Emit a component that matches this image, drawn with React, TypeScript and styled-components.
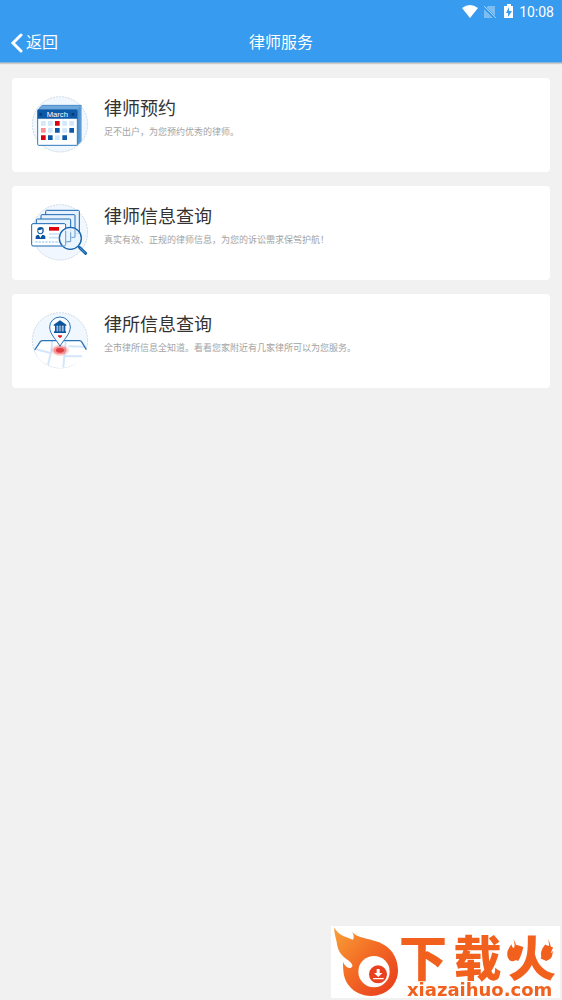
import React from "react";
import styled, { createGlobalStyle } from "styled-components";

const GlobalStyle = createGlobalStyle`
  * { box-sizing: border-box; }
  body {
    margin: 0;
    background: #f1f1f1;
    font-family: Roboto, "Noto Sans CJK SC", sans-serif;
  }
`;

const Header = styled.header`
  background: #379bef;
  border-bottom: 1px solid #8fb4d6;
  box-shadow: 0 1px 1px rgba(0, 0, 0, 0.16);
  color: #fff;
`;

const StatusBar = styled.div`
  display: flex;
  align-items: center;
  justify-content: flex-end;
  height: 24px;
  padding-right: 8px;
  font-size: 14px;
  line-height: 24px;
`;

const StatusIcons = styled.svg`
  width: 56px;
  height: 24px;
  margin-right: 1px;
`;

const NavBar = styled.nav`
  display: grid;
  grid-template-columns: 1fr auto 1fr;
  align-items: center;
  height: 38px;
  padding: 0 10px;
`;

const BackButton = styled.button`
  display: flex;
  align-items: center;
  justify-self: start;
  gap: 2px;
  padding: 0;
  border: 0;
  background: none;
  color: inherit;
  font-family: inherit;
  font-size: 16px;
  line-height: 24px;
  cursor: pointer;
`;

const BackArrow = styled.svg`
  width: 14px;
  height: 20px;
`;

const PageTitle = styled.h1`
  margin: 0;
  font-size: 16px;
  font-weight: 400;
  line-height: 24px;
`;

const CardList = styled.main`
  display: flex;
  flex-direction: column;
  gap: 14px;
  padding: 15px 12px;
`;

const Card = styled.a`
  display: flex;
  align-items: flex-start;
  gap: 14px;
  min-height: 94px;
  padding: 17px 18px 16px;
  border-radius: 4px;
  background: #fff;
  color: #333;
  text-decoration: none;
`;

const CardIcon = styled.svg`
  flex: none;
  width: 60px;
  height: 60px;
`;

const CardTitle = styled.h2`
  margin: 0;
  font-size: 18px;
  font-weight: 400;
  line-height: 28px;
`;

const CardText = styled.p`
  margin: 2px 0 0;
  color: #a3a3a3;
  font-size: 9px;
  line-height: 14px;
`;

const Watermark = styled.aside`
  position: fixed;
  right: 2px;
  bottom: 2px;
  display: flex;
  width: 229px;
  background: #fff;
  color: #f2601d;
`;

const FlameLogo = styled.svg`
  flex: none;
  width: 68px;
  height: 72px;
`;

const WatermarkText = styled.div`
  position: relative;
  flex: 1;
  padding-right: 4px;
`;

const WatermarkName = styled.div`
  display: flex;
  justify-content: space-between;
  margin-top: 8px;
  font-family: "Noto Sans CJK SC", sans-serif;
  font-size: 48px;
  font-weight: 900;
  line-height: 42px;
`;

const WatermarkSite = styled.div`
  margin-top: 6px;
  padding-left: 8px;
  font-family: "DejaVu Sans", sans-serif;
  font-size: 18px;
  font-weight: 700;
  line-height: 16px;
`;

const NameFlames = styled.svg`
  position: absolute;
  top: 8px;
  right: 4px;
  width: 50px;
  height: 32px;
`;

const Disc = () => (
  <circle cx="120" cy="109" r="83" fill="#f0f7fe" stroke="#b9c8d6" strokeWidth="2" strokeDasharray="6 3" />
);

const CalendarIcon = () => (
  <CardIcon viewBox="30 21 180 180" aria-hidden="true">
    <Disc />
    <path d="M53 65 66 51H185V159L172 173Z" fill="#6fa9dc" />
    <path d="M57 62 68 52H184M176 60V168M180 56V163" fill="none" stroke="#3b82c4" strokeWidth="2" />
    <rect x="53" y="65" width="119" height="107" rx="3" fill="#fff" stroke="#2f79bd" strokeWidth="3" />
    <path d="M53 65H172V92H53Z" fill="#0c59a8" />
    <circle cx="62" cy="79" r="4" fill="#06376b" />
    <circle cx="159" cy="79" r="4" fill="#06376b" />
    <text x="112" y="87" textAnchor="middle" fontSize="23" fontFamily="Liberation Sans, sans-serif" fill="#fff">March</text>
    <g fill="#d3e8fc">
      <path d="M63 99h14v14H63zM84 99h14v14H84zM127 99h14v14h-14zM148 99h14v14h-14zM84 120h14v14H84zM127 120h14v14h-14z" />
    </g>
    <path d="M105 120h14v14h-14zM148 120h14v14h-14zM84 142h14v14H84zM127 142h14v14h-14z" fill="#0c59a8" />
    <path d="M105 142h14v14h-14z" fill="#d3e8fc" />
    <path d="M63 120h14v14H63z" fill="#ff8f91" />
    <path d="M105 99h14v14h-14zM63 142h14v14H63z" fill="#d90011" />
  </CardIcon>
);

const LawyerSearchIcon = () => (
  <CardIcon viewBox="30 21 180 180" aria-hidden="true">
    <Disc />
    <g fill="#e5f1fd" stroke="#1b67b2" strokeWidth="3">
      <rect x="77" y="43" width="101" height="70" rx="3" />
      <rect x="63" y="56" width="102" height="69" rx="3" />
      <rect x="49" y="69" width="103" height="69" rx="3" />
      <rect x="35" y="83" width="102" height="67" rx="4" fill="#fff" />
    </g>
    <path d="M87 93h30v11H87z" fill="#df000c" />
    <path d="M87 114h30M87 125h30" stroke="#c7e0f8" strokeWidth="5" />
    <path d="M46 138h80" stroke="#c7e0f8" strokeWidth="6" strokeDasharray="7 3" />
    <path d="M52 101Q52 93 62 93T71 101V108Q68 115 61 115T52 108Z" fill="#0c559c" />
    <path d="M55 102Q63 103 67 99V107Q65 112 61 112T55 107Z" fill="#fff" />
    <path d="M47 129V122Q47 118 55 116L61 121 68 116Q76 118 76 122V129Z" fill="#0c559c" />
    <path d="m57 117 4 9 5-9" fill="#fff" />
    <circle cx="151" cy="127" r="33" fill="#e9f4ff" fillOpacity=".86" stroke="#1763ad" strokeWidth="4" />
    <path d="M137 105V146Q137 150 132 150H124M152 109V137H139M165 100V124H154" fill="none" stroke="#6fa3d3" strokeWidth="3" />
    <path d="m174 150 7 7" stroke="#1763ad" strokeWidth="5" />
    <path d="m179 155 18 17" stroke="#1763ad" strokeWidth="9" strokeLinecap="round" />
    <path d="m180 156 16 15" stroke="#78aee0" strokeWidth="2" />
  </CardIcon>
);

const FirmMapIcon = () => (
  <CardIcon viewBox="30 21 180 180" aria-hidden="true">
    <Disc />
    <path d="M45 137 61 113Q63 110 69 110H178Q183 110 186 115L199 137Q192 171 161 182 119 202 79 181 49 164 45 137Z" fill="#fff" />
    <path d="M96 111 94 141 84 182M49 136 91 147M137 112 130 190M133 157H186M145 127 197 128" fill="none" stroke="#d2e7fb" strokeWidth="6" />
    <path d="M44 138 61 113Q63 110 69 110H178Q183 110 186 115L199 137" fill="none" stroke="#2b73b7" strokeWidth="4" />
    <ellipse cx="120" cy="139" rx="27" ry="17" fill="#f66" fillOpacity=".25" />
    <ellipse cx="120" cy="139" rx="20" ry="12" fill="#ef5357" fillOpacity=".55" />
    <ellipse cx="120" cy="139" rx="12" ry="7" fill="#e03b40" />
    <path d="M120 127C111 109 89 91 89 69A31 30 0 0 1 151 69C151 91 129 109 120 127Z" fill="#f8fbff" stroke="#2b73b7" strokeWidth="3" />
    <path d="m101 62 19-13 19 13v3h-38ZM105 65h5v17h-5ZM114 65h4v17h-4ZM122 65h4v17h-4ZM131 65h5v17h-5ZM102 82h36v5h-36Z" fill="#0b559c" />
    <path d="M108 67h25v15h-25Z" fill="#5185b7" fillOpacity=".6" />
    <path d="M114 94h12v4l-4 1v3h-4v-3l-4-1Z" fill="#de1720" />
  </CardIcon>
);

const services = [
  { title: "律师预约", text: "足不出户，为您预约优秀的律师。", Icon: CalendarIcon },
  { title: "律师信息查询", text: "真实有效、正规的律师信息，为您的诉讼需求保驾护航！", Icon: LawyerSearchIcon },
  { title: "律所信息查询", text: "全市律所信息全知道。看看您家附近有几家律所可以为您服务。", Icon: FirmMapIcon },
];

export default function App() {
  return (
    <>
      <GlobalStyle />
      <Header>
        <StatusBar>
          <StatusIcons viewBox="0 0 56 24" aria-hidden="true">
            <path d="M0 8Q8 2 16 8L8 18Z" fill="#fff" />
            <path d="M26 6h7v12H22V10Z" fill="#fff" fillOpacity=".35" />
            <path d="m21 6 13 13" stroke="#379bef" strokeWidth="3" />
            <path d="m22 6 12 12" stroke="#a9d3f7" strokeWidth="1" />
            <path d="M42 6h3V4h4v2h2v12h-9Z" fill="#fff" />
            <path d="m47 7-3 6h2v4l4-6h-3Z" fill="#379bef" />
          </StatusIcons>
          <span>10:08</span>
        </StatusBar>
        <NavBar>
          <BackButton type="button">
            <BackArrow viewBox="0 0 14 20" aria-hidden="true">
              <path d="M11 2 3 10l8 8" fill="none" stroke="#fff" strokeWidth="3" strokeLinecap="round" />
            </BackArrow>
            返回
          </BackButton>
          <PageTitle>律师服务</PageTitle>
        </NavBar>
      </Header>
      <CardList>
        {services.map(({ title, text, Icon }) => (
          <Card href="#" key={title}>
            <Icon />
            <div>
              <CardTitle>{title}</CardTitle>
              <CardText>{text}</CardText>
            </div>
          </Card>
        ))}
      </CardList>
      <Watermark>
        <FlameLogo viewBox="18 18 204 216" aria-hidden="true">
          <defs>
            <linearGradient id="flame" x1="0" y1="0" x2="1" y2="1">
              <stop offset="0" stopColor="#f9a13a" />
              <stop offset=".45" stopColor="#f36d25" />
              <stop offset="1" stopColor="#e8381c" />
            </linearGradient>
          </defs>
          <path d="M28 22C38 43 56 50 84 59 88 52 86 44 82 36 93 50 114 53 147 62 190 72 219 105 219 151 219 196 183 228 138 228 94 228 57 197 55 151 54 141 54 134 54 126 60 139 68 146 78 143 88 138 79 127 67 119 44 104 38 88 35 66 32 50 27 40 28 22Z" fill="url(#flame)" />
          <circle cx="147" cy="155" r="47" fill="#fff" />
          <circle cx="159" cy="163" r="27" fill="#e9401f" />
          <path d="M155 147h9v12h8l-12 12-13-12h8ZM144 174h32v4h-32Z" fill="#fff" />
        </FlameLogo>
        <WatermarkText>
          <WatermarkName>
            <span>下</span>
            <span>载</span>
            <span>火</span>
          </WatermarkName>
          <NameFlames viewBox="0 0 150 96" aria-hidden="true">
            <path d="M22 15Q29 36 23 43 18 40 16 31 1 51 4 66 8 83 22 82 38 78 34 54 29 63 27 57 36 36 22 15ZM125 14Q134 36 124 45 119 39 118 31 101 52 106 67 113 84 128 77 141 71 140 50 136 60 132 56 139 35 125 14Z" fill="#f2601d" />
          </NameFlames>
          <WatermarkSite>xiazaihuo.com</WatermarkSite>
        </WatermarkText>
      </Watermark>
    </>
  );
}
